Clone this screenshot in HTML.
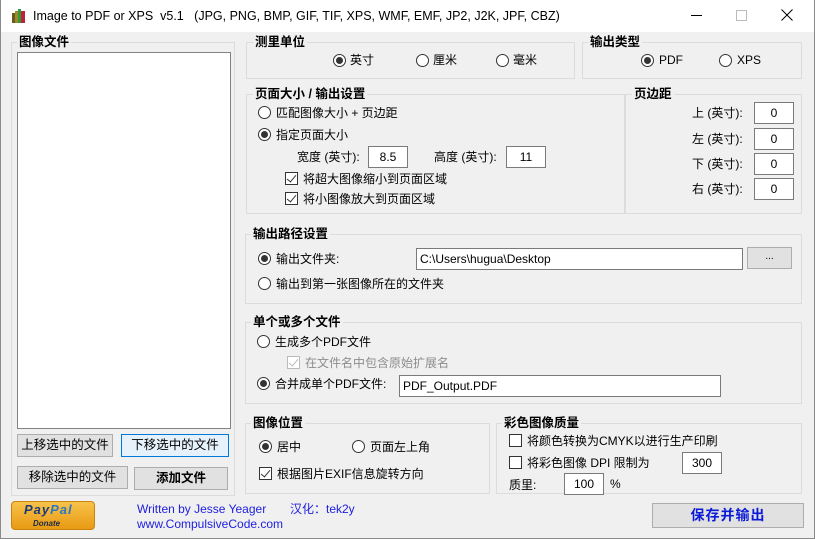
<!DOCTYPE html><html><head><meta charset="utf-8"><style>
*{box-sizing:border-box;margin:0;padding:0}
body{width:815px;height:539px;background:#f0f0f0;font-family:"Liberation Sans","Noto Sans CJK SC",sans-serif;font-size:12px;color:#000;position:relative;overflow:hidden}
.a{position:absolute;white-space:nowrap;line-height:14px}
.win{position:absolute;left:0;top:0;width:815px;height:539px;border:1px solid #8a8a8a;border-top:none}
.tb{position:absolute;left:0;top:0;width:815px;height:32px;background:#fff}
.g{position:absolute;border:1px solid #dcdcdc}
.gl{position:absolute;background:#f0f0f0;font-weight:bold;font-size:12.5px;padding:0 2px;white-space:nowrap;line-height:15px}
.r{position:absolute;width:13px;height:13px;border:1px solid #333;border-radius:50%;background:#fff}
.r.on::after{content:"";position:absolute;left:2px;top:2px;width:7px;height:7px;border-radius:50%;background:#333}
.c{position:absolute;width:13px;height:13px;border:1px solid #333;background:#fff}
.c.on::after{content:"";position:absolute;left:3px;top:0px;width:4px;height:8px;border:solid #333;border-width:0 1.5px 1.5px 0;transform:rotate(40deg)}
.c.dis{border-color:#bbb}.c.dis::after{border-color:#bbb}
.in{position:absolute;background:#fff;border:1px solid #7a7a7a;height:22px;line-height:20px;padding:0 3px;font-size:12px}
.btn{position:absolute;background:#e1e1e1;border:1px solid #adadad;text-align:center;font-size:12.5px}
</style></head><body>
<div class="tb"></div>
<div class="win"></div>
<svg class="a" style="left:11px;top:8px" width="16" height="16"><rect x="1" y="5" width="3" height="10" fill="#6b5a1e"/><rect x="4" y="3" width="3" height="12" fill="#9a8a2a"/><rect x="7" y="1" width="3" height="14" fill="#2e9a3a"/><rect x="10" y="3" width="4" height="12" fill="#c0203a"/></svg>
<div class="a" style="left:33px;top:9px;font-size:12.5px">Image to PDF or XPS&nbsp; v5.1 &nbsp; (JPG, PNG, BMP, GIF, TIF, XPS, WMF, EMF, JP2, J2K, JPF, CBZ)</div>
<div class="a" style="left:691px;top:15px;width:11px;height:1px;background:#000"></div>
<div class="a" style="left:736px;top:10px;width:11px;height:11px;border:1px solid #bbb"></div>
<svg class="a" style="left:781px;top:9px" width="12" height="12"><path d="M0.5 0.5L11.5 11.5M11.5 0.5L0.5 11.5" stroke="#000" stroke-width="1"/></svg>

<div class="g" style="left:11px;top:42px;width:224px;height:454px"></div>
<div class="gl" style="left:17px;top:35px">图像文件</div>
<div class="a" style="left:17px;top:52px;width:214px;height:377px;background:#fff;border:1px solid #828282"></div>
<div class="btn" style="left:17px;top:434px;width:96px;height:23px;line-height:21px">上移选中的文件</div>
<div class="btn" style="left:121px;top:434px;width:108px;height:23px;line-height:21px;border-color:#0078d7;background:#e5f1fb">下移选中的文件</div>
<div class="btn" style="left:17px;top:466px;width:111px;height:23px;line-height:21px">移除选中的文件</div>
<div class="btn" style="left:134px;top:467px;width:94px;height:23px;line-height:21px;font-weight:bold">添加文件</div>

<div class="a" style="left:11px;top:501px;width:84px;height:29px;border-radius:4px;background:linear-gradient(#f8c24a,#e89a12);border:1px solid #c9850f"></div>
<div class="a" style="left:24px;top:503px;font-style:italic;font-weight:bold;font-size:13px;color:#1b3a7a;letter-spacing:1px">Pay<span style="color:#2d78c4">Pal</span></div>
<div class="a" style="left:33px;top:517px;font-style:italic;font-weight:bold;font-size:8px;color:#1b2a4a">Donate</div>
<div class="a" style="left:137px;top:502px;color:#2020e0">Written by Jesse Yeager</div>
<div class="a" style="left:290px;top:502px;color:#2020e0">汉化：tek2y</div>
<div class="a" style="left:137px;top:517px;color:#2020e0">www.CompulsiveCode.com</div>

<div class="g" style="left:246px;top:42px;width:329px;height:37px"></div>
<div class="gl" style="left:253px;top:35px">测里单位</div>
<div class="r on" style="left:333px;top:54px"></div><div class="a" style="left:350px;top:53px">英寸</div>
<div class="r" style="left:416px;top:54px"></div><div class="a" style="left:433px;top:53px">厘米</div>
<div class="r" style="left:496px;top:54px"></div><div class="a" style="left:513px;top:53px">毫米</div>

<div class="g" style="left:582px;top:42px;width:220px;height:37px"></div>
<div class="gl" style="left:588px;top:35px">输出类型</div>
<div class="r on" style="left:641px;top:54px"></div><div class="a" style="left:659px;top:53px">PDF</div>
<div class="r" style="left:719px;top:54px"></div><div class="a" style="left:737px;top:53px">XPS</div>

<div class="g" style="left:246px;top:94px;width:379px;height:120px"></div>
<div class="gl" style="left:253px;top:87px">页面大小 / 输出设置</div>
<div class="r" style="left:258px;top:106px"></div><div class="a" style="left:276px;top:106px">匹配图像大小 + 页边距</div>
<div class="r on" style="left:258px;top:128px"></div><div class="a" style="left:276px;top:128px">指定页面大小</div>
<div class="a" style="left:297px;top:150px">宽度 (英寸):</div>
<div class="in" style="left:368px;top:146px;width:40px;text-align:center">8.5</div>
<div class="a" style="left:434px;top:150px">高度 (英寸):</div>
<div class="in" style="left:506px;top:146px;width:40px;text-align:center">11</div>
<div class="c on" style="left:285px;top:172px"></div><div class="a" style="left:303px;top:172px">将超大图像缩小到页面区域</div>
<div class="c on" style="left:285px;top:192px"></div><div class="a" style="left:303px;top:192px">将小图像放大到页面区域</div>

<div class="g" style="left:625px;top:94px;width:177px;height:120px"></div>
<div class="gl" style="left:632px;top:87px">页边距</div>
<div class="a" style="left:692px;top:106px">上 (英寸):</div><div class="in" style="left:754px;top:102px;width:40px;text-align:center">0</div>
<div class="a" style="left:692px;top:132px">左 (英寸):</div><div class="in" style="left:754px;top:128px;width:40px;text-align:center">0</div>
<div class="a" style="left:692px;top:157px">下 (英寸):</div><div class="in" style="left:754px;top:153px;width:40px;text-align:center">0</div>
<div class="a" style="left:692px;top:182px">右 (英寸):</div><div class="in" style="left:754px;top:178px;width:40px;text-align:center">0</div>

<div class="g" style="left:245px;top:234px;width:557px;height:70px"></div>
<div class="gl" style="left:251px;top:227px">输出路径设置</div>
<div class="r on" style="left:258px;top:252px"></div><div class="a" style="left:276px;top:252px">输出文件夹:</div>
<div class="in" style="left:416px;top:248px;width:327px">C:\Users\hugua\Desktop</div>
<div class="btn" style="left:747px;top:247px;width:45px;height:22px;line-height:18px;font-size:10px">...</div>
<div class="r" style="left:258px;top:277px"></div><div class="a" style="left:276px;top:277px">输出到第一张图像所在的文件夹</div>

<div class="g" style="left:245px;top:322px;width:557px;height:82px"></div>
<div class="gl" style="left:251px;top:315px">单个或多个文件</div>
<div class="r" style="left:257px;top:335px"></div><div class="a" style="left:275px;top:335px">生成多个PDF文件</div>
<div class="c on dis" style="left:287px;top:356px"></div><div class="a" style="left:305px;top:356px;color:#8d8d8d">在文件名中包含原始扩展名</div>
<div class="r on" style="left:257px;top:377px"></div><div class="a" style="left:275px;top:377px">合并成单个PDF文件:</div>
<div class="in" style="left:399px;top:375px;width:322px">PDF_Output.PDF</div>

<div class="g" style="left:245px;top:423px;width:245px;height:71px"></div>
<div class="gl" style="left:251px;top:416px">图像位置</div>
<div class="r on" style="left:259px;top:440px"></div><div class="a" style="left:277px;top:440px">居中</div>
<div class="r" style="left:352px;top:440px"></div><div class="a" style="left:370px;top:440px">页面左上角</div>
<div class="c on" style="left:259px;top:467px"></div><div class="a" style="left:277px;top:467px">根据图片EXIF信息旋转方向</div>

<div class="g" style="left:496px;top:423px;width:306px;height:71px"></div>
<div class="gl" style="left:502px;top:416px">彩色图像质量</div>
<div class="c" style="left:509px;top:434px"></div><div class="a" style="left:527px;top:434px">将颜色转换为CMYK以进行生产印刷</div>
<div class="c" style="left:509px;top:456px"></div><div class="a" style="left:527px;top:456px">将彩色图像 DPI 限制为</div>
<div class="in" style="left:682px;top:452px;width:40px;text-align:center">300</div>
<div class="a" style="left:509px;top:478px">质里:</div>
<div class="in" style="left:564px;top:473px;width:40px;text-align:center">100</div>
<div class="a" style="left:610px;top:477px">%</div>

<div class="btn" style="left:652px;top:503px;width:152px;height:25px;line-height:23px;font-weight:bold;font-size:14px;color:#0a1ad8;letter-spacing:1px">保存并输出</div>
</body></html>
